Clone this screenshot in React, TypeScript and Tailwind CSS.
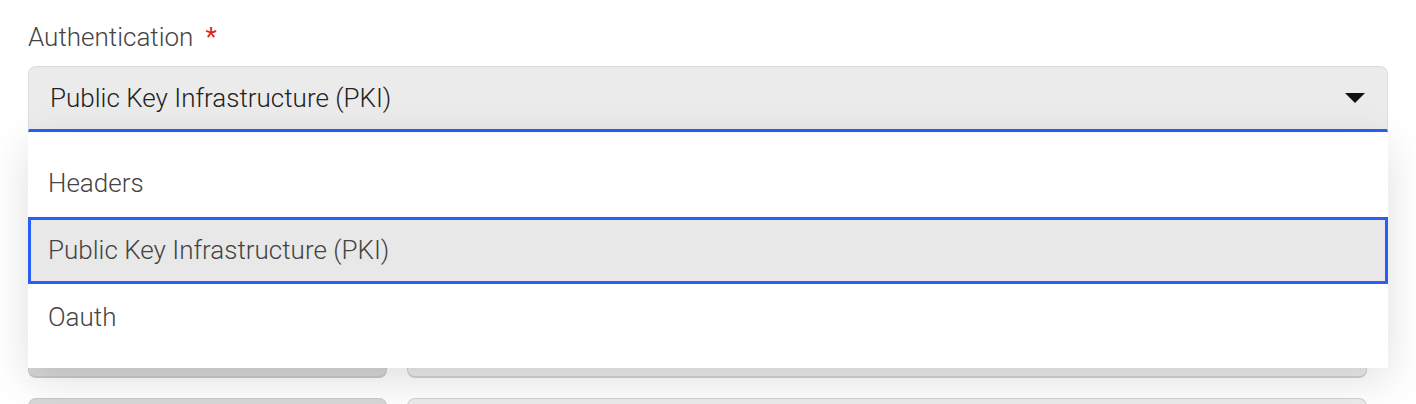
import { useState } from 'react';

const OPTIONS = ['Headers', 'Public Key Infrastructure (PKI)', 'Oauth'];

export default function App() {
  const [value] = useState('Public Key Infrastructure (PKI)');

  return (
    <div className="h-screen overflow-hidden bg-white font-['Roboto',sans-serif] px-[28px] pt-[20px]">
      <label className="flex items-center gap-[12px] text-[26px] font-light text-[#444] leading-[34px]">
        Authentication <span className="text-[#e02424] font-normal">*</span>
      </label>

      <div className="relative mt-[12px] w-[1360px]">
        {/* Select */}
        <div className="h-[66px] rounded-t-[8px] bg-[#ebebeb] border border-[#dcdcdc] border-b-[3px] border-b-[#2a5ff4] flex items-center justify-between pl-[21px] pr-[22px]">
          <span className="text-[26px] font-light text-[#222]">{value}</span>
          <svg width="20" height="10" viewBox="0 0 20 10">
            <path d="M0 0 L20 0 L10 10 Z" fill="#111" />
          </svg>
        </div>

        {/* Menu */}
        <ul className="absolute left-0 right-0 top-[67px] z-10 bg-white py-[17px] shadow-[0_12px_40px_rgba(0,0,0,0.13)]">
          {OPTIONS.map((opt) => (
            <li
              key={opt}
              className={
                opt === value
                  ? 'h-[67px] flex items-center px-[17px] bg-[#e8e8e8] border-[3px] border-[#2a5ff4] text-[26px] font-light text-[#444]'
                  : 'h-[67px] flex items-center px-[20px] text-[26px] font-light text-[#444]'
              }
            >
              {opt}
            </li>
          ))}
        </ul>

        {/* Fields underneath */}
        <div className="mt-[181px] flex flex-col gap-[20px]">
          {[0, 1].map((r) => (
            <div key={r} className="flex gap-[20px]">
              <div className="w-[359px] h-[65px] rounded-[8px] bg-[#d8d8d8] border border-[#c9c9c9] border-b-2" />
              <div className="w-[960px] h-[65px] rounded-[8px] bg-[#ececec] border border-[#d2d2d2] border-b-2" />
            </div>
          ))}
        </div>
      </div>
    </div>
  );
}
